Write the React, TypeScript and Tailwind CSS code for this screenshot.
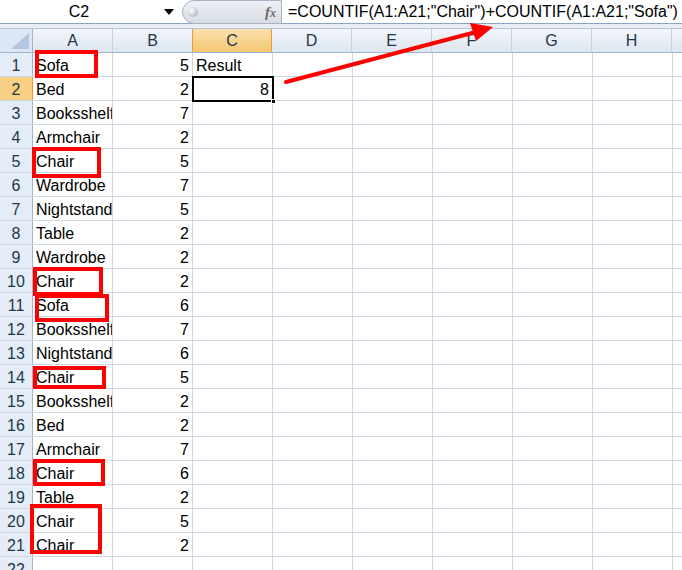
import React from "react";

const rows: Array<[string, number]> = [
  ["Sofa", 5],
  ["Bed", 2],
  ["Booksshelf", 7],
  ["Armchair", 2],
  ["Chair", 5],
  ["Wardrobe", 7],
  ["Nightstand", 5],
  ["Table", 2],
  ["Wardrobe", 2],
  ["Chair", 2],
  ["Sofa", 6],
  ["Booksshelf", 7],
  ["Nightstand", 6],
  ["Chair", 5],
  ["Booksshelf", 2],
  ["Bed", 2],
  ["Armchair", 7],
  ["Chair", 6],
  ["Table", 2],
  ["Chair", 5],
  ["Chair", 2],
];

const cols = ["A", "B", "C", "D", "E", "F", "G", "H"];

// red highlight boxes drawn over column A
const boxes = [
  { l: 35, t: 50, w: 63, h: 28 },
  { l: 32, t: 147, w: 69, h: 31 },
  { l: 33, t: 267, w: 70, h: 29 },
  { l: 35, t: 294, w: 74, h: 28 },
  { l: 33, t: 366, w: 73, h: 23 },
  { l: 33, t: 459, w: 72, h: 27 },
  { l: 30, t: 504, w: 72, h: 50 },
];

function Cell({ children, className = "" }: { children?: React.ReactNode; className?: string }) {
  return (
    <div className={`w-[80px] h-full shrink-0 border-r border-[#d0d7e5] px-[3px] pt-[2px] flex items-center overflow-hidden whitespace-nowrap ${className}`}>
      {children}
    </div>
  );
}

export default function App() {
  const allRows = [...rows.map((r) => r as [string, number] | null), null];

  return (
    <div
      className="relative w-[682px] h-[570px] overflow-hidden bg-white text-[16px] text-black"
      style={{ fontFamily: '"Liberation Sans", Arial, sans-serif' }}
    >
      {/* Formula bar */}
      <div className="flex h-[24px] bg-white border-b border-[#8ca5c2]">
        <div className="w-[182px] relative flex items-center justify-center">
          <span className="mr-[24px]">C2</span>
          <svg className="absolute left-[164px] top-[9px]" width="10" height="6" viewBox="0 0 10 6">
            <path d="M0 0 L10 0 L5 6 Z" fill="#000" />
          </svg>
        </div>
        <div className="w-[100px] h-[24px] rounded-l-full bg-gradient-to-b from-[#eef1f5] to-[#d7dce3] border border-[#a7b4c4] relative flex items-center justify-end pr-[5px]">
          <div className="absolute left-[5px] top-[6px] w-[10px] h-[10px] rounded-full bg-[radial-gradient(circle_at_35%_35%,#ffffff,#9aa4b1)]" />
          <span className="italic font-bold text-[15px] text-[#6a6a6a]" style={{ fontFamily: '"Liberation Serif", serif' }}>
            f<span className="text-[12px]">x</span>
          </span>
        </div>
        <div className="flex-1 pl-[6px] flex items-center whitespace-nowrap">
          =COUNTIF(A1:A21;"Chair")+COUNTIF(A1:A21;"Sofa")
        </div>
      </div>
      <div className="h-[5px] bg-[#e9eef5] border-b border-[#b6c6da]" />

      {/* Column headers */}
      <div className="flex h-[24px] border-b border-[#9eb6ce] bg-gradient-to-b from-[#f3f6fa] to-[#dde5ef] text-[#23374b]">
        <div className="w-[33px] shrink-0 border-r border-[#9eb6ce] relative bg-[#dce6f4]">
          <svg className="absolute right-[3px] bottom-[3px]" width="18" height="16" viewBox="0 0 18 16">
            <path d="M18 0 L18 16 L0 16 Z" fill="#b3c6e0" />
          </svg>
        </div>
        {cols.map((c) => (
          <div
            key={c}
            className={`w-[80px] shrink-0 flex items-center justify-center pt-[1px] border-r ${
              c === "C"
                ? "bg-gradient-to-b from-[#fae0ae] to-[#f4c771] border-[#f29536] border-l border-l-[#f29536] -ml-px"
                : "border-[#c5d2e1]"
            }`}
          >
            {c}
          </div>
        ))}
        <div className="flex-1" />
      </div>

      {/* Rows */}
      {allRows.map((r, i) => {
        const n = i + 1;
        return (
          <div key={n} className="flex h-[24px] border-b border-[#d0d7e5]">
            <div
              className={`w-[33px] shrink-0 flex items-center justify-center pt-[2px] border-r text-[#23374b] ${
                n === 2 ? "bg-[#f7cf85] border-[#f29536]" : "bg-[#e4ecf7] border-[#9eb6ce]"
              }`}
            >
              {n}
            </div>
            <Cell>{r ? r[0] : ""}</Cell>
            <Cell className="justify-end">{r ? r[1] : ""}</Cell>
            <Cell className={n === 2 ? "justify-end" : ""}>
              {n === 1 ? "Result" : n === 2 ? "8" : ""}
            </Cell>
            <Cell />
            <Cell />
            <Cell />
            <Cell />
            <Cell />
            <div className="flex-1" />
          </div>
        );
      })}

      {/* Active cell C2 */}
      <div className="absolute left-[192px] top-[76px] w-[82px] h-[26px] border-2 border-black pointer-events-none" />
      <div className="absolute left-[271px] top-[99px] w-[5px] h-[5px] bg-black border border-white" />

      {/* Red annotation boxes */}
      {boxes.map((b, i) => (
        <div
          key={i}
          className="absolute border-4 border-[#ff0000] pointer-events-none"
          style={{ left: b.l, top: b.t, width: b.w, height: b.h }}
        />
      ))}

      {/* Red arrow */}
      <svg className="absolute left-0 top-0 pointer-events-none" width="682" height="570">
        <line x1="286" y1="82" x2="476" y2="32" stroke="#ff0000" strokeWidth="4" strokeLinecap="round" />
        <path d="M493 27 L470 23 L476 41 Z" fill="#ff0000" />
      </svg>
    </div>
  );
}
